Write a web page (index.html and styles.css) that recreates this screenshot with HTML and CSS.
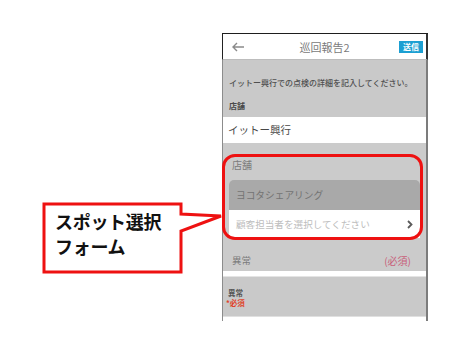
FILE: index.html
```html
<!DOCTYPE html>
<html lang="ja">
<head>
<meta charset="utf-8">
<link rel="stylesheet" href="styles.css">
</head>
<body>
<div class="stage">
  <div class="phone">
    <div class="header">
      <svg class="back" width="14" height="10" viewBox="0 0 14 10"><path d="M13 5H2M6 1L2 5L6 9" fill="none" stroke="#8a8a8a" stroke-width="1.4"/></svg>
      <div class="title">巡回報告2</div>
      <div class="send">送信</div>
    </div>
    <div class="body">
      <div class="intro">
        <div class="intro-text">イットー興行での点検の詳細を記入してください。</div>
        <div class="small-label">店舗</div>
      </div>
      <div class="store-row">イットー興行</div>
      <div class="section">
        <div class="sec-label">店舗</div>
        <div class="card">
          <div class="card-head">ヨコタシェアリング</div>
          <div class="card-row">
            <span class="placeholder">顧客担当者を選択してください</span>
            <svg class="chev" width="6" height="9" viewBox="0 0 6 9"><path d="M1 1L4.5 4.5L1 8" fill="none" stroke="#5a5a5a" stroke-width="1.8"/></svg>
          </div>
        </div>
        <div class="abn-row">
          <span class="abn">異常</span>
          <span class="req">(必須)</span>
        </div>
      </div>
      <div class="stripe"></div>
      <div class="lower">
        <div class="small-label">異常</div>
        <div class="req-small">*必須</div>
      </div>
      <div class="foot"></div>
    </div>
  </div>
  <div class="highlight"></div>
  <svg class="callout" width="463" height="339" viewBox="0 0 463 339">
    <path d="M44,204 H181 V214 L221,216 L181,231 V272 H44 Z" fill="#fff" stroke="#ee1111" stroke-width="3" stroke-linejoin="miter"/>
  </svg>
  <div class="callout-text">スポット選択<br>フォーム</div>
</div>
</body>
</html>
```

FILE: styles.css
```css
* { box-sizing: border-box; }
html, body { margin: 0; padding: 0; background: #fff; }
body { font-family: "Noto Sans CJK JP", "Noto Sans", sans-serif; }
.stage { position: relative; width: 463px; height: 339px; overflow: hidden; padding-top: 33px; padding-left: 222px; }
.phone { width: 206px; border-top: 1.5px solid #1e1e1e; }
.header { height: 26px; background: #fff; display: flex; align-items: center; border-left: 1px solid #222; border-right: 2px solid #333; padding: 0 3px 0 8px; position: relative; border-bottom: 1px solid #bdbdbd; }
.back { display: block; margin-top: 1px; }
.title { position: absolute; left: 0; right: 0; text-align: center; font-size: 11px; color: #7a7a7a; line-height: 26px; pointer-events: none; }
.send { margin-left: auto; background: #1c9fd2; color: #fff; font-size: 8px; font-weight: 700; width: 24px; height: 12px; line-height: 12px; text-align: center; margin-top: 1px; }
.body { background: #c9c9c9; border-left: 1px solid #8c8c8c; border-right: 2px solid #7c7c7c; }
.intro { height: 57px; padding: 17px 0 0 6px; }
.intro-text { font-size: 8px; color: #505050; line-height: 12px; font-weight: 500; }
.small-label { font-size: 8px; color: #4a4a4a; line-height: 10px; font-weight: 700; margin-top: 12px; }
.store-row { height: 26px; background: #fff; font-size: 10.5px; color: #474747; padding-left: 5px; line-height: 26px; }
.section { height: 128px; padding: 12px 6px 0 6px; background: #cbcbcb; }
.sec-label { font-size: 10px; color: #7b7b7b; line-height: 20px; padding-left: 3px; height: 25px; }
.card { border-radius: 5px 5px 0 0; overflow: hidden; }
.card-head { height: 30px; background: #a9a9a9; font-size: 9.7px; color: #737373; line-height: 30px; padding-left: 7px; }
.card-row { height: 28px; background: #fff; display: flex; align-items: center; padding: 0 7px; }
.placeholder { font-size: 9.6px; color: #bdbdbd; }
.chev { margin-left: auto; }
.abn-row { display: flex; align-items: center; height: 24px; margin-top: 10px; padding: 0 9px 0 3px; }
.abn { font-size: 9.5px; color: #7b7b7b; }
.req { margin-left: auto; font-size: 10px; color: #c8607a; }
.stripe { height: 6px; background: #fff; border-bottom: 1px solid #e4e4e4; }
.lower { height: 39px; padding: 11px 0 0 5px; }
.lower .small-label { margin-top: 0; font-size: 7.5px; color: #555; }
.req-small { font-size: 7.5px; color: #e0432a; line-height: 10px; margin-left: -2px; font-weight: 700; }
.foot { height: 5px; background: #fff; border-top: 1px solid #e0e0e0; }
.highlight { position: absolute; left: 222px; top: 154px; width: 201px; height: 86px; border: 3px solid #ee1111; border-radius: 13px; pointer-events: none; }
.callout { position: absolute; left: 0; top: 0; pointer-events: none; }
.callout-text { position: absolute; left: 55px; top: 209px; font-size: 18px; font-weight: 700; line-height: 25px; color: #111; letter-spacing: -0.3px; }
```
